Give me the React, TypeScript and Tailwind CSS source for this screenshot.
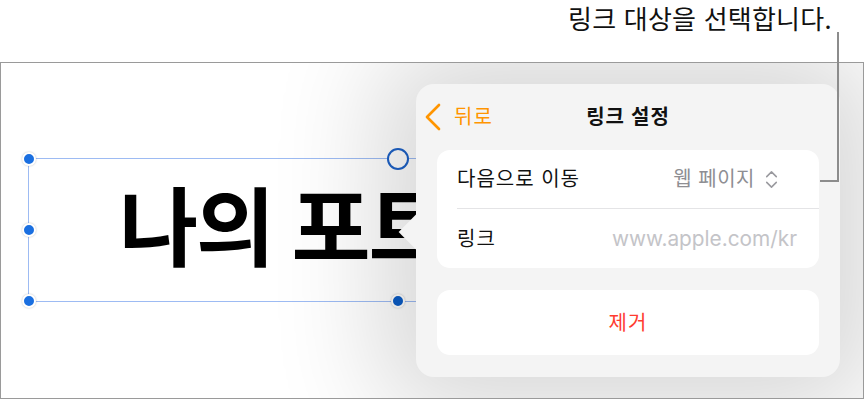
import React from 'react';
import { ChevronLeft, ChevronsUpDown } from 'lucide-react';

const font = { fontFamily: 'Inter, "Noto Sans CJK KR", sans-serif' };

const Handle = ({ className }: { className: string }) => (
  <div className={`absolute w-[14px] h-[14px] -ml-[7px] -mt-[7px] rounded-full bg-[#1a6fe0] border-2 border-white shadow-[0_0_2px_rgba(0,0,0,0.25)] ${className}`} />
);

export default function App() {
  return (
    <div className="relative w-[865px] h-[399px] bg-white overflow-hidden flex flex-col" style={font}>
      {/* callout */}
      <div className="h-[62px] flex justify-end pr-[33px] pt-[3px]">
        <span className="text-[26px] leading-[34px] text-[#111] tracking-[0.2px]">링크 대상을 선택합니다.</span>
      </div>

      {/* canvas */}
      <div className="relative flex-1 mr-[1px] border border-[#9a9a9a] overflow-hidden bg-white">
        {/* left part of the slide, the popover covers the rest */}
        <div className="absolute left-0 top-0 bottom-0 w-[415px] overflow-hidden">
          <div className="absolute left-[27px] top-[95px] w-[740px] h-[144px] border border-[#9dbbf3] flex items-center justify-center">
            <span className="text-[86px] font-bold leading-none tracking-[-2px] text-black -mt-[2px] whitespace-nowrap">나의 포트폴리오</span>
            <Handle className="left-0 top-0" />
            <Handle className="left-0 top-1/2" />
            <Handle className="left-0 top-full" />
            <Handle className="left-1/2 top-full !bg-[#0b5cc6]" />
            <div className="absolute left-1/2 top-0 w-[22px] h-[22px] -ml-[11px] -mt-[11px] rounded-full border-2 border-[#1d62c8] bg-white" />
          </div>
        </div>

        {/* popover */}
        <div className="absolute left-[415px] top-[21px] w-[424px] h-[293px] rounded-[18px] bg-[#f4f4f4] shadow-[0_0_110px_36px_rgba(0,0,0,0.16)] flex flex-col px-[21px] pb-[22px]">
          <div className="absolute -left-[12px] top-[135px] w-[26px] h-[26px] rotate-45 bg-[#f4f4f4]" />
          <div className="relative h-[66px] flex items-center">
            <div className="relative z-10 flex items-center text-[#ff9500] -ml-[28px]">
              <ChevronLeft size={48} strokeWidth={1.35} />
              <span className="text-[20px] -ml-[3px] tracking-[1px]">뒤로</span>
            </div>
            <span className="absolute left-0 right-0 text-center text-[20px] font-semibold text-[#111] tracking-[1px]">링크 설정</span>
          </div>

          <div className="bg-white rounded-[13px] flex flex-col">
            <div className="h-[58px] flex items-center justify-between pl-[20px] pr-[36px]">
              <span className="text-[20px] text-[#111] tracking-[1px]">다음으로 이동</span>
              <div className="flex items-center gap-[5px] text-[#8e8e93]">
                <span className="text-[20px] tracking-[0.5px]">웹 페이지</span>
                <ChevronsUpDown size={23} strokeWidth={1.6} className="text-[#9a9a9f]" />
              </div>
            </div>
            <div className="ml-[20px] h-px bg-[#e4e4e6]" />
            <div className="h-[59px] flex items-center justify-between pl-[20px] pr-[22px]">
              <span className="text-[20px] text-[#111] tracking-[1px]">링크</span>
              <span className="text-[20.8px] text-[#c4c4c8]">www.apple.com/kr</span>
            </div>
          </div>

          <div className="mt-[22px] h-[65px] bg-white rounded-[13px] flex items-center justify-center">
            <span className="text-[20px] text-[#ff3b30] tracking-[1px]">제거</span>
          </div>
        </div>
      </div>

      {/* callout line */}
      <div className="absolute left-[820px] top-[32px] w-[19px] h-[150px] border-r-2 border-b-2 border-[#8c8c8c]" />
    </div>
  );
}
